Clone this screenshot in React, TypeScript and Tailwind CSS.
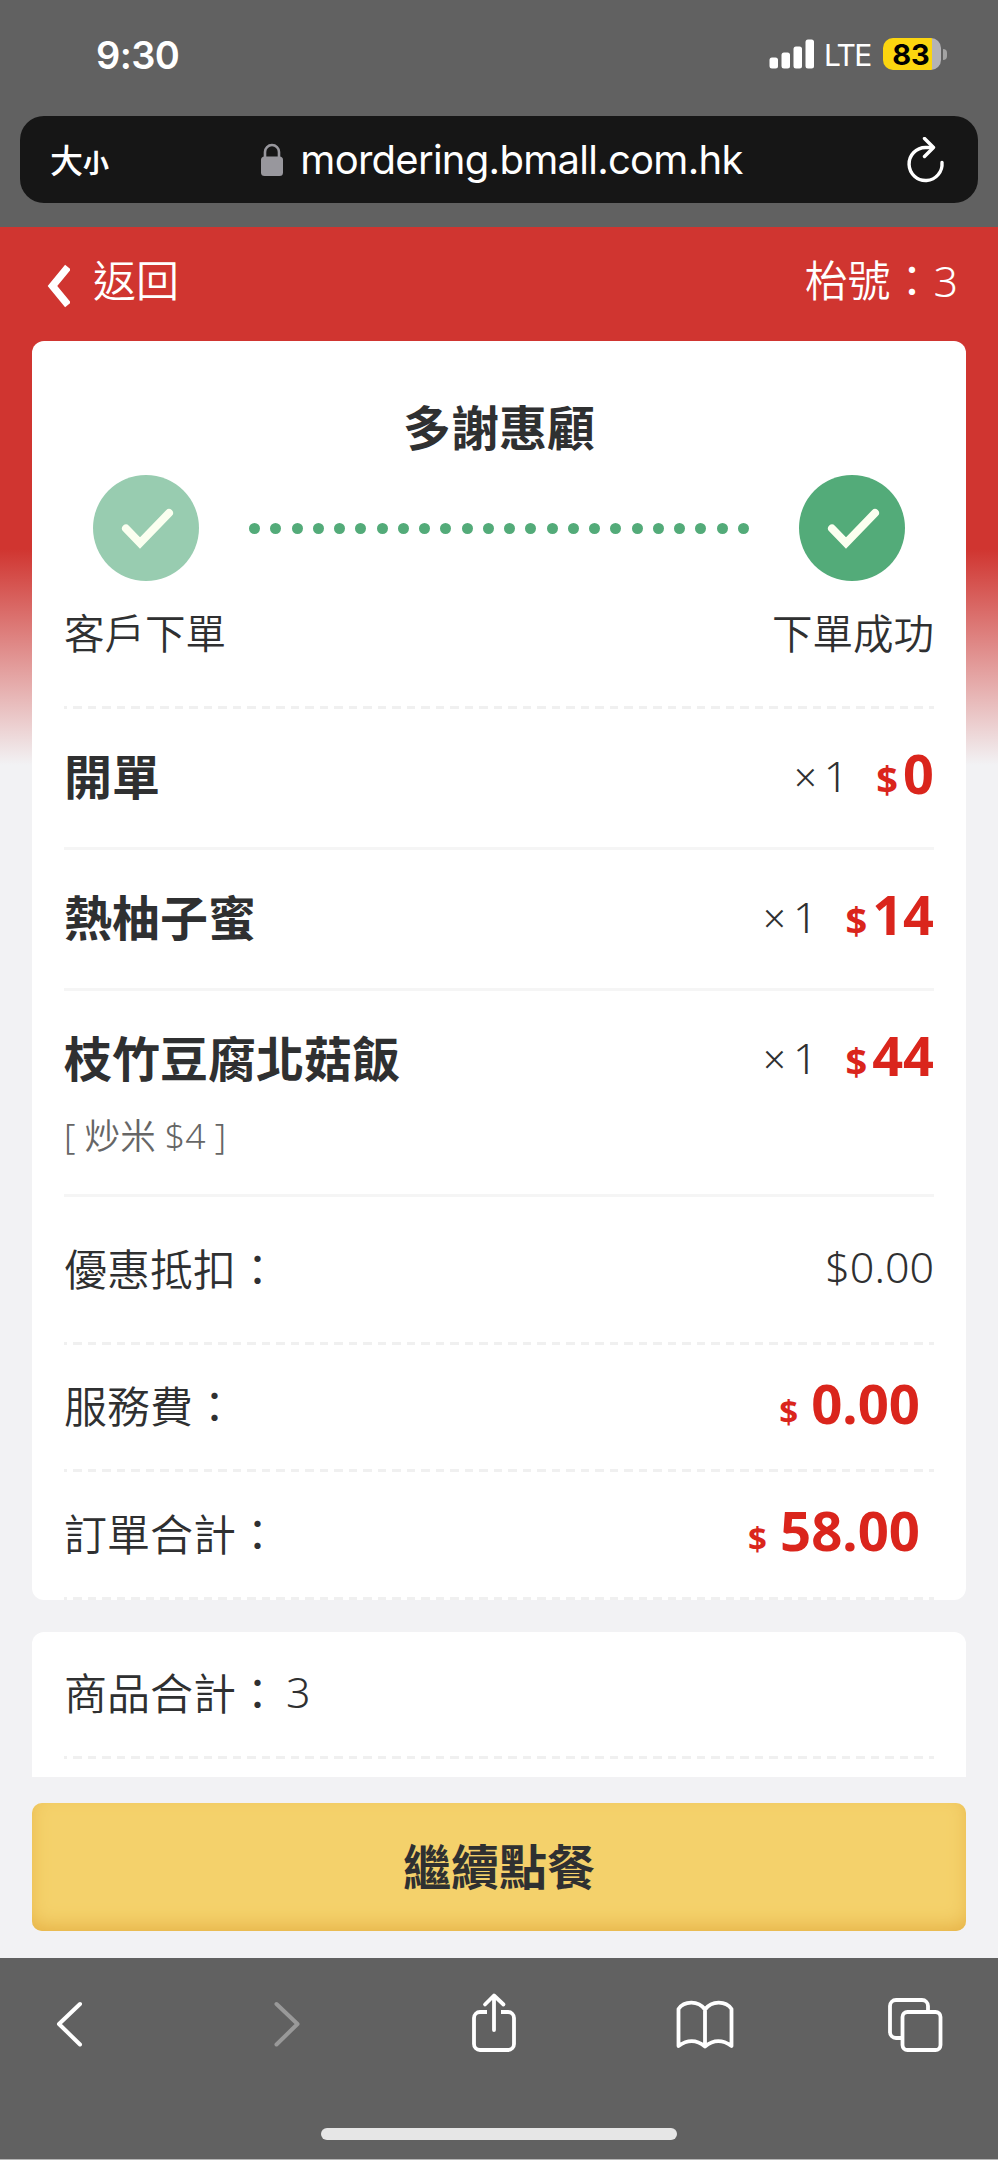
import type { ReactNode } from 'react'

type OrderItem = {
  name: string
  qty: number
  price: string
  note?: string
}

const items: OrderItem[] = [
  { name: '開單', qty: 1, price: '0' },
  { name: '熱柚子蜜', qty: 1, price: '14' },
  { name: '枝竹豆腐北菇飯', qty: 1, price: '44', note: '[ 炒米 $4 ]' },
]

function StatusBar() {
  return (
    <div className="flex h-[116px] items-start justify-between pl-[96px] pr-[51px] pt-[34px] font-['Inter',sans-serif] text-white">
      <span className="text-[38px] font-semibold leading-[42px] tracking-[-0.6px]">9:30</span>
      <div className="flex h-[40px] items-center">
        <svg className="h-[30px] w-[46px]" viewBox="0 0 46 30" fill="currentColor">
          <rect x="0.5" y="18.5" width="8.5" height="11" rx="2.5" />
          <rect x="12.5" y="13.5" width="8.5" height="16" rx="2.5" />
          <rect x="24.5" y="7.5" width="8.5" height="22" rx="2.5" />
          <rect x="36.5" y="0.5" width="8.5" height="29" rx="2.5" />
        </svg>
        <span className="ml-[9px] w-[48px] pt-[2px] text-[30px] leading-[40px] tracking-[-1.6px]">LTE</span>
        <div className="ml-[11px] flex h-[32px] w-[58px] items-center justify-center overflow-hidden rounded-[10px] bg-[linear-gradient(90deg,#fbd50f_0_49px,#b4b3b6_49px)] pr-[2px] text-[29px] font-bold leading-none text-black">
          83
        </div>
        <div className="ml-[2px] h-[11px] w-[4px] rounded-r-full bg-[#a3a3a3]" />
      </div>
    </div>
  )
}

function AddressBar() {
  return (
    <div className="mx-[20px] flex h-[87px] items-center justify-between rounded-[24px] bg-[#161616] pl-[30px] pr-[33px] text-white">
      <div className="flex w-[88px] items-baseline pb-[1px] font-['Noto_Sans_CJK_TC',sans-serif] font-medium leading-none">
        <span className="text-[33px]">大</span>
        <span className="text-[26px] font-bold">小</span>
      </div>
      <div className="flex items-center">
        <svg className="mr-[16px] h-[34px] w-[24px]" viewBox="0 0 24 34">
          <path d="M5 15V9a7 7 0 0 1 14 0v6" fill="none" stroke="#98979d" strokeWidth="2.6" />
          <rect x="1" y="13.5" width="22" height="19.5" rx="3.5" fill="#98979d" />
        </svg>
        <span className="font-['Inter',sans-serif] text-[40px] leading-none tracking-[-0.72px]">
          mordering.bmall.com.hk
        </span>
      </div>
      <div className="flex w-[80px] justify-end">
        <svg
          className="h-[46px] w-[40px]"
          viewBox="0 0 40 46"
          fill="none"
          stroke="currentColor"
          strokeWidth="3.4"
          strokeLinecap="round"
          strokeLinejoin="round"
        >
          <path d="M37 25.500a16.500 16.500 0 1 1-16.500-15h7" />
          <path d="M19.500 1.500l9 9-9 9" />
        </svg>
      </div>
    </div>
  )
}

function PageHeader() {
  return (
    <header className="flex h-[114px] items-start justify-between pl-[42px] pr-[40px] pt-[32px] text-[43px] font-[350] leading-[44px] text-white">
      <div className="flex">
        <svg className="mt-[5px] h-[44px] w-[28px]" viewBox="0 0 28 44" fill="none" stroke="currentColor" strokeWidth="7.5">
          <path d="M26 3L10.500 22 26 41" />
        </svg>
        <span className="ml-[23px]">返回</span>
      </div>
      <span>枱號：3</span>
    </header>
  )
}

function Dashes() {
  return (
    <div className="h-[3px] bg-[repeating-linear-gradient(90deg,#f0f0f0_0_3px,transparent_3px_9px,#f0f0f0_9px_14.5px)]" />
  )
}

function Step({ color }: { color: string }) {
  return (
    <svg className="size-[106px]" viewBox="0 0 106 106" fill="none">
      <circle cx="53" cy="53" r="53" fill={color} />
      <path d="M33 53.500l14 14.500L76 38" stroke="#fbfff0" strokeWidth="8" strokeLinecap="round" />
    </svg>
  )
}

function Progress() {
  return (
    <div>
      <div className="flex items-center justify-between px-[29px]">
        <Step color="#98ccb0" />
        <div className="flex w-[500px] justify-between">
          {Array.from({ length: 24 }, (_, i) => (
            <span key={i} className="size-[11px] rounded-full bg-[#53ab79]" />
          ))}
        </div>
        <Step color="#53ab79" />
      </div>
      <div className="mt-[29px] flex justify-between text-[40.500px] font-[350] leading-[48px]">
        <span>客戶下單</span>
        <span>下單成功</span>
      </div>
    </div>
  )
}

function ItemRow({ item }: { item: OrderItem }) {
  return (
    <li className="border-b-[3px] border-[#f5f5f5] pt-[44px] pb-[46px]">
      <div className="flex h-[48px] items-center justify-between">
        <span className="text-[48px] font-bold leading-[48px]">{item.name}</span>
        <div className="flex items-baseline pb-[2px] leading-[48px]">
          <span className="-translate-y-[2px] text-[43px] font-[350]">
            <span className="text-[40px]">×</span>
            <span className="ml-[7px]">{item.qty}</span>
          </span>
          <span className="ml-[28px] text-[38px] font-bold text-[#da251c]">$</span>
          <span className="ml-[5px] text-[54px] font-bold text-[#da251c]">{item.price}</span>
        </div>
      </div>
      {item.note && (
        <div className="mt-[32px] -mb-[7px] text-[35.500px] font-[350] leading-[40px] text-[#666]">{item.note}</div>
      )}
    </li>
  )
}

function SummaryRow({ label, className, children }: { label: string; className: string; children?: ReactNode }) {
  return (
    <>
      <div className={`flex items-center text-[43px] font-[350] leading-[48px] ${className}`}>
        <span>{label}</span>
        {children}
      </div>
      <Dashes />
    </>
  )
}

function Total({ value }: { value: string }) {
  return (
    <span className="mr-[14px] ml-auto font-bold text-[#da251c]">
      <span className="text-[33px]">$</span>
      <span className="ml-[13px] text-[54.500px]">{value}</span>
    </span>
  )
}

function Toolbar() {
  const icon = 'h-[64px] w-[60px]'
  return (
    <nav className="flex h-[202px] flex-col justify-between border-b border-[#b5b5b5] bg-[#616161] pt-[34px] pb-[19px] text-white">
      <div className="flex justify-between pl-[40px] pr-[52px] [&_svg]:fill-none [&_svg]:stroke-current [&_svg]:[stroke-linecap:round] [&_svg]:[stroke-linejoin:round]">
        <svg className={icon} viewBox="0 0 60 64" strokeWidth="4">
          <path d="M40 12L19 32l21 20.500" />
        </svg>
        <svg className={`${icon} text-[#999]`} viewBox="0 0 60 64" strokeWidth="4">
          <path d="M24.500 12l21 20-21 20.500" />
        </svg>
        <svg className={icon} viewBox="0 0 60 64" strokeWidth="3.8">
          <path strokeLinecap="butt" d="M24 20H17a6 6 0 0 0-6 6v26a6 6 0 0 0 6 6h28a6 6 0 0 0 6-6V26a6 6 0 0 0-6-6h-7" />
          <path d="M31 38V4M22 12.500l9-9 9.500 9" />
        </svg>
        <svg className={icon} viewBox="0 0 60 64" strokeWidth="3.8">
          <path d="M30 17.500C23 8 9 9 3.500 17v37c9-6.500 18-6.500 26.500 0.500 8.500-7 17.500-7 26.500-0.500V17C51 9 37 8 30 17.500zM30 17.500v37" />
        </svg>
        <svg className={icon} viewBox="1 0 60 64" strokeWidth="3.8">
          <rect x="17.500" y="20" width="38" height="38" rx="5" />
          <path d="M17 46h-6a6 6 0 0 1-6-6V14a6 6 0 0 1 6-6h26a6 6 0 0 1 6 6v6" />
        </svg>
      </div>
      <div className="ml-[321px] h-[12px] w-[356px] rounded-full bg-[#e6e6e6]" />
    </nav>
  )
}

export default function App() {
  return (
    <div className="flex h-[2160px] w-full flex-col overflow-hidden bg-[#616161] font-['Noto_Sans','Noto_Sans_CJK_TC',sans-serif] text-[#2f3031]">
      <div className="h-[227px] shrink-0">
        <StatusBar />
        <AddressBar />
      </div>

      <main className="flex h-[1731px] shrink-0 flex-col bg-[linear-gradient(#d03530_0_322px,#f2f2f4_538px)]">
        <PageHeader />
        <div className="h-[1436px] overflow-hidden px-[32px]">
          <section className="h-[1259px] overflow-hidden rounded-[12px] bg-white px-[32px] pt-[61px]">
            <h1 className="mb-[21px] text-center text-[48px] font-bold leading-[52px]">多謝惠顧</h1>
            <Progress />
            <div className="mt-[48px]">
              <Dashes />
            </div>
            <ul>
              {items.map((item) => (
                <ItemRow key={item.name} item={item} />
              ))}
            </ul>
            <SummaryRow label="優惠抵扣：" className="h-[145px]">
              <span className="ml-auto pb-[5px]">$0.00</span>
            </SummaryRow>
            <SummaryRow label="服務費：" className="h-[124px]">
              <Total value="0.00" />
            </SummaryRow>
            <SummaryRow label="訂單合計：" className="h-[125px]">
              <Total value="58.00" />
            </SummaryRow>
          </section>
          <section className="mt-[32px] h-[300px] rounded-[12px] bg-white px-[32px]">
            <SummaryRow label="商品合計：" className="h-[124px]">
              <span className="ml-[7px] pb-[5px]">3</span>
            </SummaryRow>
          </section>
        </div>
        <div className="grow bg-[#f2f2f4] px-[32px] pt-[26px]">
          <button className="h-[128px] w-full rounded-[10px] bg-[#f4d16b] text-[48px] font-bold shadow-[inset_0_-8px_20px_-4px_#e5b044]">
            繼續點餐
          </button>
        </div>
      </main>

      <Toolbar />
    </div>
  )
}
